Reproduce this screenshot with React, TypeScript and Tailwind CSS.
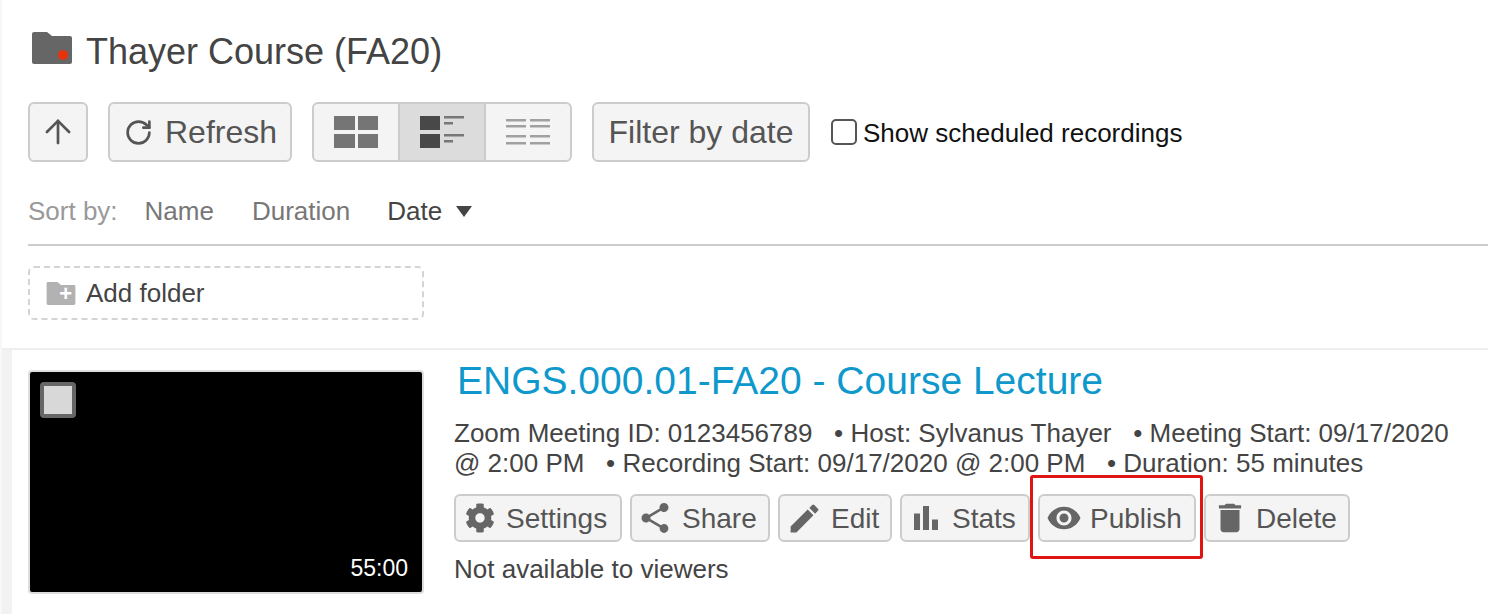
import { ArrowUp, RotateCw } from "lucide-react";
import { FaCog } from "react-icons/fa";
import { MdBarChart, MdDelete, MdEdit, MdShare, MdVisibility } from "react-icons/md";

const Folder = ({ className }: { className: string }) => (
  <svg viewBox="0 0 40 32" className={className} fill="currentColor">
    <path d="M2 0h13l5 4h18a2 2 0 0 1 2 2v24a2 2 0 0 1-2 2H2a2 2 0 0 1-2-2V2a2 2 0 0 1 2-2z" />
  </svg>
);

const ToolButton = ({ className, children }: { className: string; children: React.ReactNode }) => (
  <button className={`flex h-[60px] items-center rounded-[6px] border-2 border-[#cccccc] bg-[#f4f4f4] text-[#555555] ${className}`}>
    {children}
  </button>
);

const GridIcon = () => (
  <svg viewBox="0 0 44 32" className="h-[32px] w-[44px]" fill="#757575">
    <rect x="0" y="0" width="21" height="14" />
    <rect x="24" y="0" width="20" height="14" />
    <rect x="0" y="18" width="21" height="14" />
    <rect x="24" y="18" width="20" height="14" />
  </svg>
);

const DetailIcon = () => (
  <svg viewBox="0 0 44 32" className="h-[32px] w-[44px]" fill="#484848">
    <rect x="0" y="0" width="20" height="14" />
    <rect x="0" y="18" width="20" height="14" />
    <rect x="24" y="0" width="20" height="2.5" fill="#777777" />
    <rect x="24" y="6" width="9" height="2.5" fill="#777777" />
    <rect x="24" y="18" width="20" height="2.5" fill="#777777" />
    <rect x="24" y="24" width="9" height="2.5" fill="#777777" />
  </svg>
);

const ListIcon = () => (
  <svg viewBox="0 0 44 26" className="h-[26px] w-[44px]" fill="#a0a0a0">
    {[0, 6, 16, 23].map((y) => (
      <g key={y}>
        <rect x="0" y={y} width="20" height="2.5" />
        <rect x="24" y={y} width="20" height="2.5" />
      </g>
    ))}
  </svg>
);

const ActionButton = ({ icon, label, className }: { icon: React.ReactNode; label: string; className: string }) => (
  <button className={`flex h-[48px] items-center rounded-[6px] border-2 border-[#cccccc] bg-[#f4f4f4] pl-[11px] text-[28px] text-[#555555] ${className}`}>
    {icon}
    <span className="pt-[2px]">{label}</span>
  </button>
);

export default function App() {
  return (
    <div className="h-[614px] w-[1488px] overflow-hidden border-l-2 border-[#f8f8f8] bg-white font-['Liberation_Sans',Arial,sans-serif] text-[#444444]">
      <div className="pl-[26px]">
        <div className="flex h-[102px] items-start pt-[32px]">
          <div className="relative ml-[4px] mr-[14px] text-[#666666]">
            <Folder className="h-[32px] w-[40px]" />
            <span className="absolute bottom-[4px] right-[4px] h-[10px] w-[10px] rounded-full bg-[#e8320a]" />
          </div>
          <h1 className="text-[36px] leading-[40px] text-[#444444]">Thayer Course (FA20)</h1>
        </div>

        <div className="flex items-center">
          <ToolButton className="w-[60px] justify-center">
            <ArrowUp size={38} strokeWidth={1.7} />
          </ToolButton>
          <ToolButton className="ml-[20px] w-[184px] pl-[14px] text-[32px]">
            <RotateCw size={29} strokeWidth={2.2} className="mr-[12px]" />
            Refresh
          </ToolButton>
          <div className="ml-[20px] flex h-[60px] w-[260px] overflow-hidden rounded-[6px] border-2 border-[#cccccc] bg-[#f4f4f4]">
            <div className="flex flex-1 items-center justify-center"><GridIcon /></div>
            <div className="flex w-[88px] items-center justify-center border-x-2 border-[#cccccc] bg-[#dcdcdc]"><DetailIcon /></div>
            <div className="flex flex-1 items-center justify-center"><ListIcon /></div>
          </div>
          <ToolButton className="ml-[20px] w-[218px] justify-center text-[32px]">Filter by date</ToolButton>
          <span className="ml-[21px] h-[26px] w-[26px] rounded-[5px] border-2 border-[#555555] bg-white" />
          <span className="ml-[6px] pt-[2px] text-[26px] text-[#111111]">Show scheduled recordings</span>
        </div>

        <div className="flex h-[84px] items-center border-b-2 border-[#cccccc] pt-[16px] text-[26px]">
          <span className="text-[#999999]">Sort by:</span>
          <span className="ml-[27px] text-[#777777]">Name</span>
          <span className="ml-[38px] text-[#777777]">Duration</span>
          <span className="ml-[37px] text-[#444444]">Date</span>
          <span className="ml-[14px] mt-[1px] h-0 w-0 border-x-[8px] border-t-[11px] border-x-transparent border-t-[#444444]" />
        </div>

        <div className="mt-[20px] flex h-[54px] w-[396px] items-center rounded-[6px] border-2 border-dashed border-[#d4d4d4] pl-[16px] text-[26px] text-[#444444]">
          <div className="relative mr-[10px] text-[#b2b2b2]">
            <Folder className="h-[23px] w-[30px]" />
            <span className="absolute bottom-[0px] right-[4px] text-[22px] font-bold leading-[22px] text-white">+</span>
          </div>
          Add folder
        </div>
      </div>

      <div className="mt-[28px] h-[300px] border-t-2 border-[#eeeeee] bg-[#f2f2f2] pl-[10px]">
        <div className="flex h-full bg-white pl-[16px] pt-[20px]">
          <div className="relative h-[224px] w-[396px] shrink-0 rounded-[4px] border-2 border-[#dddddd] bg-black">
            <span className="absolute left-[10px] top-[10px] h-[36px] w-[36px] rounded-[4px] border-[4px] border-[#666666] bg-[#d8d8d8]" />
            <span className="absolute bottom-[10px] right-[14px] text-[23px] leading-[28px] text-white">55:00</span>
          </div>
          <div className="relative ml-[30px] min-w-0 flex-1">
            <h2 className="-mt-[11px] ml-[3px] text-[39px] leading-[44px] text-[#0e98cc]">ENGS.000.01-FA20 - Course Lecture</h2>
            <p className="mt-[15px] w-[1010px] text-[26px] leading-[30px] text-[#444444]">
              Zoom Meeting ID: 0123456789 &nbsp; • Host: Sylvanus Thayer &nbsp; • Meeting Start: 09/17/2020 @ 2:00 PM &nbsp; • Recording Start: 09/17/2020 @ 2:00 PM &nbsp; • Duration: 55 minutes
            </p>
            <div className="mt-[16px] flex gap-[8px]">
              <ActionButton className="w-[168px]" icon={<FaCog size={30} className="-ml-[2px] mr-[11px] shrink-0 text-[#666666]" />} label="Settings" />
              <ActionButton className="w-[140px]" icon={<MdShare size={36} className="-ml-[6px] mr-[9px] shrink-0 text-[#666666]" />} label="Share" />
              <ActionButton className="w-[114px]" icon={<MdEdit size={37} className="-ml-[5px] mr-[8px] shrink-0 text-[#666666]" />} label="Edit" />
              <ActionButton className="w-[130px]" icon={<MdBarChart size={36} className="-ml-[5px] mr-[8px] shrink-0 text-[#666666]" />} label="Stats" />
              <ActionButton className="w-[158px]" icon={<MdVisibility size={36} className="-ml-[5px] mr-[8px] shrink-0 text-[#666666]" />} label="Publish" />
              <ActionButton className="w-[146px]" icon={<MdDelete size={38} className="-ml-[6px] mr-[7px] shrink-0 text-[#666666]" />} label="Delete" />
            </div>
            <p className="mt-[12px] text-[26px] leading-[30px] text-[#444444]">Not available to viewers</p>
            <div className="absolute left-[576px] top-[105px] h-[84px] w-[173px] rounded-[3px] border-[3px] border-[#e11414]" />
          </div>
        </div>
      </div>
    </div>
  );
}
